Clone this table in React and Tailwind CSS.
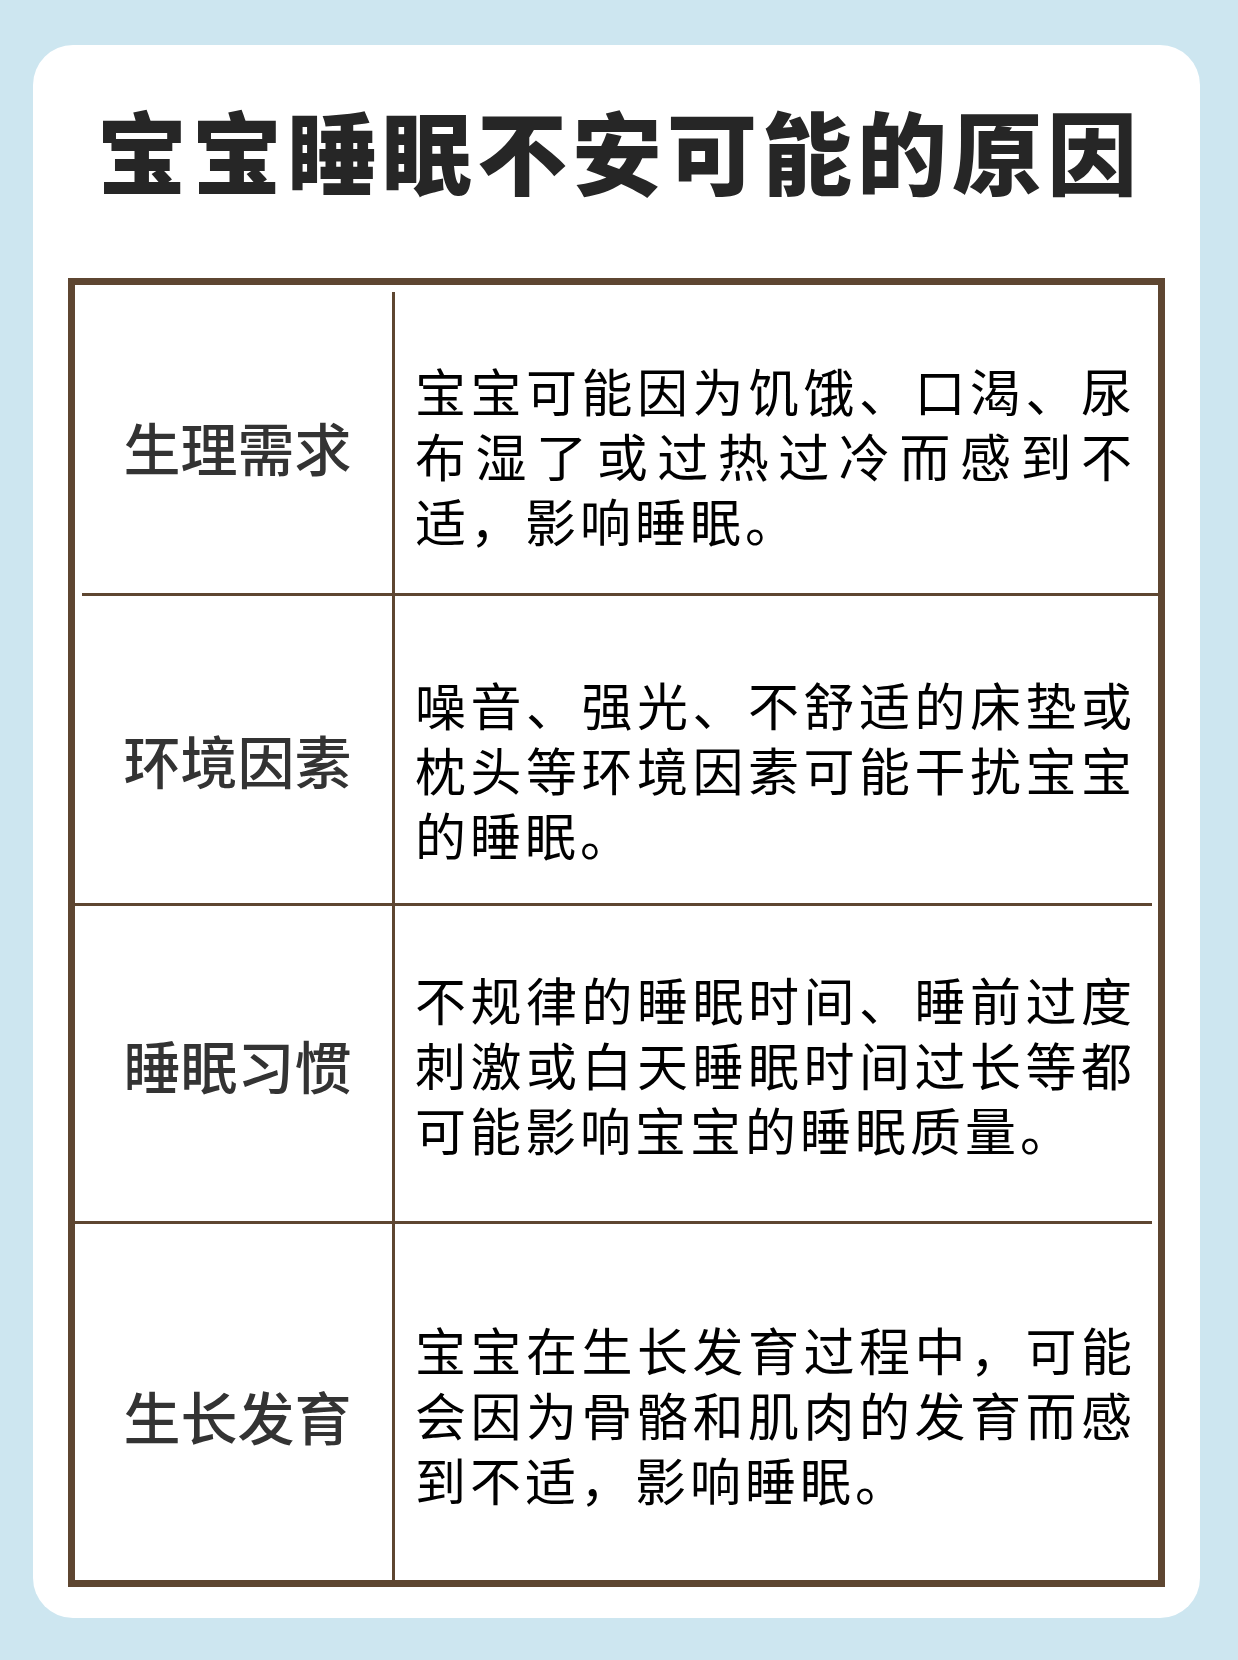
import React from "react";

const rows = [
  {
    label: "生理需求",
    text: "宝宝可能因为饥饿、口渴、尿布湿了或过热过冷而感到不适，影响睡眠。",
    h: "h-[308px]",
    lp: "pt-[14px]",
    tp: "pt-[32px]",
    divider: "ml-[7px]",
    vTop: "mt-[7px]",
  },
  {
    label: "环境因素",
    text: "噪音、强光、不舒适的床垫或枕头等环境因素可能干扰宝宝的睡眠。",
    h: "h-[307px]",
    lp: "pt-[18px]",
    tp: "pt-[40px]",
    divider: "mr-[6px]",
    vTop: "mt-0",
  },
  {
    label: "睡眠习惯",
    text: "不规律的睡眠时间、睡前过度刺激或白天睡眠时间过长等都可能影响宝宝的睡眠质量。",
    h: "h-[315px]",
    lp: "pt-0",
    tp: "pt-[2px]",
    divider: "mr-[6px]",
    vTop: "mt-0",
  },
  {
    label: "生长发育",
    text: "宝宝在生长发育过程中，可能会因为骨骼和肌肉的发育而感到不适，影响睡眠。",
    h: "h-[356px]",
    lp: "pt-[26px]",
    tp: "pt-[25px]",
    divider: null,
    vTop: "mt-0",
  },
];

export default function App() {
  return (
    <div
      className="w-[1238px] h-[1660px] bg-[#cde6f0] pt-[45px] pl-[33px]"
      style={{ fontFamily: '"Noto Sans CJK SC", "Noto Sans", sans-serif' }}
    >
      <div className="w-[1167px] h-[1573px] rounded-[40px] bg-white pt-[59px]">
        <h1 className="h-[90px] flex items-center justify-center text-[90px] leading-[90px] font-black text-[#262626] tracking-[5px] pl-[6px]">
          宝宝睡眠不安可能的原因
        </h1>
        <div className="mt-[84px] ml-[35px] w-[1097px] border-[7px] border-[#5e4631] flex flex-col">
          {rows.map((r, i) => (
            <React.Fragment key={i}>
              <div className={`flex ${r.h}`}>
                <div
                  className={`w-[317px] flex items-center justify-center pl-[8px] ${r.lp} text-[57px] leading-[70px] font-medium text-[#333333]`}
                >
                  {r.label}
                </div>
                <div className={`w-[3px] bg-[#5e4631] ${r.vTop}`} />
                <div className={`flex-1 flex items-center pl-[20px] pr-[22px] ${r.tp}`}>
                  <p
                    className="w-[721px] text-[51px] leading-[65px] tracking-[4px] text-black text-justify"
                    style={{ lineBreak: "strict" }}
                  >
                    {r.text}
                  </p>
                </div>
              </div>
              {r.divider && (
                <div className={`h-[3px] bg-[#5e4631] ${r.divider}`} />
              )}
            </React.Fragment>
          ))}
        </div>
      </div>
    </div>
  );
}
